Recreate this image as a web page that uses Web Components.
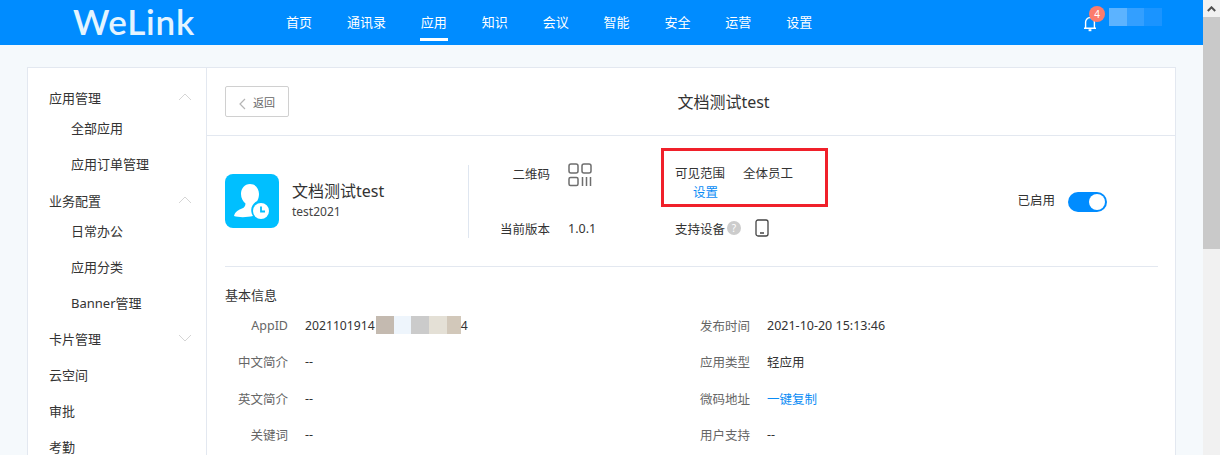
<!DOCTYPE html>
<html lang="zh-CN">
<head>
<meta charset="utf-8">
<title>WeLink</title>
<style>
html, body { margin: 0; height: 455px; overflow: hidden; }
body {
  display: flex;
  font: 13px "Noto Sans", "Noto Sans CJK SC", sans-serif;
  color: #333;
  background: #f5f9fc;
}
</style>
</head>
<body>
<wl-page>
  <wl-header>
    <wl-nav-item>首页</wl-nav-item>
    <wl-nav-item>通讯录</wl-nav-item>
    <wl-nav-item active>应用</wl-nav-item>
    <wl-nav-item>知识</wl-nav-item>
    <wl-nav-item>会议</wl-nav-item>
    <wl-nav-item>智能</wl-nav-item>
    <wl-nav-item>安全</wl-nav-item>
    <wl-nav-item>运营</wl-nav-item>
    <wl-nav-item>设置</wl-nav-item>
  </wl-header>
  <wl-console>
    <wl-sidebar slot="side">
      <wl-side-group open>应用管理</wl-side-group>
      <wl-side-link>全部应用</wl-side-link>
      <wl-side-link>应用订单管理</wl-side-link>
      <wl-side-group open>业务配置</wl-side-group>
      <wl-side-link>日常办公</wl-side-link>
      <wl-side-link>应用分类</wl-side-link>
      <wl-side-link>Banner管理</wl-side-link>
      <wl-side-group closed>卡片管理</wl-side-group>
      <wl-side-group>云空间</wl-side-group>
      <wl-side-group>审批</wl-side-group>
      <wl-side-group>考勤</wl-side-group>
    </wl-sidebar>
    <wl-title-bar>文档测试test</wl-title-bar>
    <wl-app-summary></wl-app-summary>
    <wl-basic-info></wl-basic-info>
  </wl-console>
</wl-page>
<wl-scrollbar></wl-scrollbar>

<script>
function define(name, html, setup) {
  customElements.define(name, class extends HTMLElement {
    constructor() {
      super()
      this.attachShadow({mode: 'open'}).innerHTML = html
      if (setup) setup(this)
    }
  })
}

define('wl-page', `
<style>
:host { display: flex; flex-direction: column; flex: 1; min-width: 0; }
</style>
<slot></slot>`)

define('wl-header', `
<style>
:host {
  display: flex;
  flex: none;
  height: 45px;
  background: #008cff;
  color: #fff;
}
.logo {
  width: 286px;
  box-sizing: border-box;
  padding-left: 73px;
  font: 600 35px/42px "Lato", sans-serif;
  letter-spacing: 0.8px;
  color: #e4f4ff;
}
nav { display: flex; gap: 34.9px; flex: 1; }
.user { display: flex; align-items: flex-start; margin-right: 41px; position: relative; }
.bell { margin: 15px 12px 0 0; display: block; }
.badge {
  position: absolute;
  left: 6px;
  top: 6px;
  width: 16px;
  height: 16px;
  border-radius: 50%;
  background: #fb7c6c;
  font-size: 10px;
  line-height: 16px;
  text-align: center;
}
.masks { display: flex; margin-top: 8px; }
.masks i { display: block; height: 18px; width: 18px; }
</style>
<div class="logo">WeLink</div>
<nav><slot></slot></nav>
<div class="user">
  <svg class="bell" width="14" height="17" viewBox="0 0 14 17" fill="none" stroke="#fff" stroke-width="1.4">
    <path d="M1 13.2h12M2.6 13V7a4.4 4.4 0 0 1 8.8 0v6"/>
    <path d="M5.6 15.2h2.8" stroke-width="2"/>
  </svg>
  <span class="badge">4</span>
  <div class="masks">
    <i style="background:#5cb3ff"></i><i style="background:#339fff;width:17px"></i><i style="background:#1a94ff"></i>
  </div>
</div>`)

define('wl-nav-item', `
<style>
:host {
  display: block;
  position: relative;
  font-size: 13px;
  line-height: 44px;
  white-space: nowrap;
}
:host([active])::after {
  content: "";
  position: absolute;
  left: -1px;
  right: -1px;
  top: 38px;
  height: 3px;
  background: #fff;
}
</style>
<slot></slot>`)

define('wl-console', `
<style>
:host {
  display: block;
  flex: 1;
  min-height: 0;
  padding: 22px 27px 0;
}
.card {
  display: flex;
  height: 400px;
  background: #fff;
  border: 1px solid #e3e8f0;
}
.side { width: 178px; flex: none; border-right: 1px solid #e3e8f0; }
.main { flex: 1; min-width: 0; }
</style>
<div class="card">
  <div class="side"><slot name="side"></slot></div>
  <div class="main"><slot></slot></div>
</div>`)

define('wl-sidebar', `
<style>
:host { display: block; padding-top: 11px; }
</style>
<slot></slot>`)

define('wl-side-group', `
<style>
:host {
  display: flex;
  align-items: center;
  justify-content: space-between;
  height: 36px;
  padding: 0 14px 0 21px;
  color: #333;
}
:host([closed]) { margin-top: -1px; }
svg { display: none; }
:host([open]) .up, :host([closed]) .down { display: block; }
</style>
<slot></slot>
<svg class="up" width="14" height="8" viewBox="0 0 14 8" fill="none" stroke="#d5d5d5"><path d="M1 7l6-6 6 6"/></svg>
<svg class="down" width="14" height="8" viewBox="0 0 14 8" fill="none" stroke="#d5d5d5"><path d="M1 1l6 6 6-6"/></svg>`)

define('wl-side-link', `
<style>
:host {
  display: block;
  line-height: 36px;
  padding-left: 43px;
  color: #333;
}
</style>
<slot></slot>`, el => {
  const prev = el.previousElementSibling
  if (prev && prev.localName === 'wl-side-group') el.style.marginTop = '-5px'
})

define('wl-title-bar', `
<style>
:host {
  display: flex;
  align-items: center;
  height: 67px;
  padding: 0 17px 0 18px;
  border-bottom: 1px solid #e3e8f0;
}
button {
  display: flex;
  align-items: center;
  gap: 7px;
  box-sizing: border-box;
  width: 64px;
  height: 31px;
  margin: 0;
  padding: 0 0 0 13px;
  background: #fff;
  border: 1px solid #d0d0d0;
  border-radius: 2px;
  color: #666;
  font: 11px "Noto Sans", "Noto Sans CJK SC", sans-serif;
}
button svg { margin-top: 4px; }
h1 {
  flex: 1;
  margin: 0 0 1px;
  text-align: center;
  font-size: 16px;
  font-weight: 400;
  color: #333;
}
</style>
<button>
  <svg width="7" height="12" viewBox="0 0 7 12" fill="none" stroke="#b5b5b5" stroke-width="1.2"><path d="M6 1L1 6l5 5"/></svg>
  返回
</button>
<h1><slot></slot></h1>`)

define('wl-app-summary', `
<style>
:host {
  display: flex;
  height: 130px;
  margin: 0 17px 0 18px;
  border-bottom: 1px solid #e3e8f0;
  position: relative;
  font-size: 12.5px;
}
.app {
  display: flex;
  align-items: center;
  align-self: flex-start;
  gap: 13px;
  box-sizing: border-box;
  width: 244px;
  height: 73px;
  margin-top: 29px;
  border-right: 1px solid #dfe6f0;
}
.app svg { margin-top: -2px; }
.name { font-size: 16px; line-height: 22px; color: #333; margin-top: -1px; }
.code { font-size: 12px; line-height: 20px; color: #444; }
.specs {
  display: grid;
  grid-template-columns: 82px 27px auto;
  grid-template-rows: 32px 32px;
  column-gap: 18px;
  row-gap: 23px;
  margin-top: 21px;
  margin-left: -1px;
  height: 87px;
  align-items: center;
}
.label { text-align: right; }
.qr { align-self: start; margin-top: 6px; }
.scope { display: flex; flex-direction: column; align-self: start; padding-top: 7px; line-height: 19px; margin-left: 62px; }
.scope .top { display: flex; gap: 18px; white-space: nowrap; }
.scope a { color: #0a8cf5; margin-left: 18px; }
.device { display: flex; align-items: center; white-space: nowrap; margin-left: 62px; }
.help {
  width: 14px;
  height: 14px;
  border-radius: 50%;
  background: #ccc;
  color: #fff;
  margin: 0 14px 0 2px;
  font-size: 10px;
  line-height: 14px;
  text-align: center;
}
.state {
  display: flex;
  align-items: center;
  gap: 13px;
  position: absolute;
  right: 51px;
  top: 56px;
}
.state span { margin-top: -6px; margin-left: -1px; }
.toggle {
  display: block;
  position: relative;
  width: 39px;
  height: 20px;
  border-radius: 10px;
  background: #008cff;
}
.toggle::after {
  content: "";
  position: absolute;
  right: 2px;
  top: 2px;
  width: 16px;
  height: 16px;
  border-radius: 50%;
  background: #fff;
}
.mark {
  position: absolute;
  left: 436px;
  top: 12px;
  width: 167px;
  height: 59px;
  box-sizing: border-box;
  border: 3px solid #f0202a;
  pointer-events: none;
}
</style>
<div class="app">
  <svg width="54" height="54" viewBox="0 0 54 54">
    <rect width="54" height="54" rx="8" fill="#00bfff"/>
    <path d="M25 10c-5.500 0-9 4.500-9 10 0 4 2 7.500 4.500 9.500-.2 2.500-1 4-3.500 5-3 1.200-7 3-8 7.500 4 1.500 13 1.500 19 0-1-1.500-1.800-3.500-1.800-6 0-4 2.800-7.500 6-9 1-2 1.800-4 1.800-7 0-5.500-3.500-10-9-10z" fill="#fff"/>
    <circle cx="36" cy="37" r="8" fill="#fff"/>
    <path d="M36 32.500V37.500h4" fill="none" stroke="#00bfff" stroke-width="1.800"/>
  </svg>
  <div>
    <div class="name">文档测试test</div>
    <div class="code">test2021</div>
  </div>
</div>
<div class="specs">
  <span class="label">二维码</span>
  <svg class="qr" width="24" height="24" viewBox="0 0 24 24" fill="none" stroke="#6e6e6e" stroke-width="1.500">
    <rect x="1" y="1" width="9" height="9" rx="2"/><rect x="14" y="1" width="9" height="9" rx="2"/><rect x="1" y="14.500" width="9" height="8" rx="1.500"/>
    <path d="M14.500 14v9M18.500 14v9M22.500 14v9"/>
  </svg>
  <div class="scope">
    <div class="top"><span>可见范围</span><span>全体员工</span></div>
    <a>设置</a>
  </div>
  <span class="label">当前版本</span>
  <span>1.0.1</span>
  <div class="device">
    <span>支持设备</span><span class="help">?</span>
    <svg width="14" height="18" viewBox="0 0 14 18" fill="none" stroke="#444" stroke-width="1.300">
      <rect x="1" y="1" width="12" height="16" rx="2"/><path d="M5 14h4" stroke-width="1.500"/>
    </svg>
  </div>
</div>
<div class="state"><span>已启用</span><i class="toggle"></i></div>
<div class="mark"></div>`)

define('wl-basic-info', `
<style>
:host { display: block; margin: 0 17px 0 18px; font-size: 12.5px; }
h2 { margin: 0; padding-top: 18px; height: 20px; font-size: 13px; line-height: 20px; font-weight: 400; color: #333; }
.rows {
  display: grid;
  grid-template-columns: 63px 1fr 468px;
  grid-auto-rows: 36.5px;
  align-items: center;
  column-gap: 17px;
  margin-top: 2px;
}
.l { text-align: right; color: #666; white-space: nowrap; }
.r { display: grid; grid-template-columns: 60px 1fr; column-gap: 17px; align-items: center; }
.id { display: flex; align-items: center; font-size: 12.2px; }
.id i { display: block; height: 18px; }
a { color: #0a8cf5; }
</style>
<h2>基本信息</h2>
<div class="rows">
  <span class="l">AppID</span>
  <span class="id">2021101914<i style="width:18px;background:#c4bab0;margin-left:1px"></i><i style="width:17px;background:#eef5fc"></i><i style="width:18px;background:#cbcbcb"></i><i style="width:18px;background:#e4e0d6"></i><i style="width:14px;background:#d2c8ba"></i>4</span>
  <div class="r"><span class="l">发布时间</span><span>2021-10-20 15:13:46</span></div>
  <span class="l">中文简介</span><span>--</span>
  <div class="r"><span class="l">应用类型</span><span>轻应用</span></div>
  <span class="l">英文简介</span><span>--</span>
  <div class="r"><span class="l">微码地址</span><a>一键复制</a></div>
  <span class="l">关键词</span><span>--</span>
  <div class="r"><span class="l">用户支持</span><span>--</span></div>
</div>`)

define('wl-scrollbar', `
<style>
:host { display: flex; flex-direction: column; flex: none; width: 17px; height: 455px; background: #f1f1f1; }
.btn { height: 17px; display: flex; align-items: center; justify-content: center; }
.thumb { height: 232px; background: #c9c9c9; }
</style>
<div class="btn">
  <svg width="9" height="6" viewBox="0 0 9 6" fill="none" stroke="#505050" stroke-width="2"><path d="M.8 5l3.700-3.700L8.200 5"/></svg>
</div>
<div class="thumb"></div>`)
</script>
</body>
</html>
